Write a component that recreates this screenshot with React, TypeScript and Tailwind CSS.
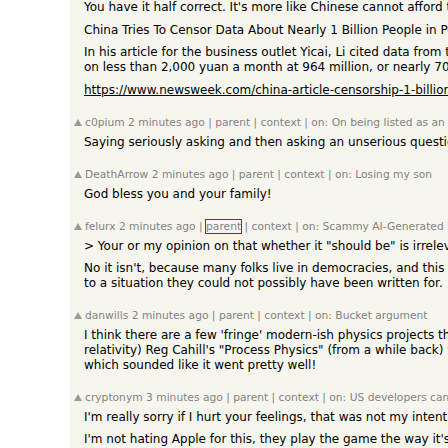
import React from 'react';

type Comment = {
  user: string;
  age: string;
  on: string;
  paras: string[][];
  focusParent?: boolean;
};

const comments: Comment[] = [
  {
    user: 'c0pium',
    age: '2 minutes ago',
    on: 'On being listed as an unserious person',
    paras: [['Saying seriously asking and then asking an unserious question is not how this works']],
  },
  {
    user: 'DeathArrow',
    age: '2 minutes ago',
    on: 'Losing my son',
    paras: [['God bless you and your family!']],
  },
  {
    user: 'felurx',
    age: '2 minutes ago',
    on: 'Scammy AI-Generated Book About Living with ADHD',
    focusParent: true,
    paras: [
      ['> Your or my opinion on that whether it "should be" is irrelevant here.'],
      [
        "No it isn't, because many folks live in democracies, and this is how laws get applied",
        'to a situation they could not possibly have been written for.',
      ],
    ],
  },
  {
    user: 'danwills',
    age: '2 minutes ago',
    on: 'Bucket argument',
    paras: [
      [
        "I think there are a few 'fringe' modern-ish physics projects that attempt this (beyond",
        'relativity) Reg Cahill\'s "Process Physics" (from a while back) was one I came across,',
        'which sounded like it went pretty well!',
      ],
    ],
  },
  {
    user: 'cryptonym',
    age: '3 minutes ago',
    on: 'US developers can now offer non-App-Store purchasing',
    paras: [
      ["I'm really sorry if I hurt your feelings, that was not my intention."],
      ["I'm not hating Apple for this, they play the game the way it's designed."],
    ],
  },
];

const Arrow = () => (
  <svg width="8" height="7" viewBox="0 0 8 7" className="shrink-0 mr-[3px]">
    <polygon points="4,0 8,7 0,7" fill="#9a9a9a" />
  </svg>
);

const Paras = ({ paras }: { paras: string[][] }) => (
  <div>
    {paras.map((lines, i) => (
      <div key={i} className={i === 0 ? '' : 'mt-[7px]'}>
        {lines.map((l, j) => (
          <div key={j} className="whitespace-nowrap leading-[15px] h-[15px]">
            {l}
          </div>
        ))}
      </div>
    ))}
  </div>
);

export default function App() {
  return (
    <div
      className="flex w-[448px] h-[448px] overflow-hidden bg-white text-black"
      style={{ fontFamily: '"DejaVu Sans", Verdana, sans-serif' }}
    >
      <div className="w-[70px] shrink-0 bg-white" />
      <div className="flex-1 bg-[#f6f6ef] overflow-hidden text-[12px]">
        <div className="pl-[14px]">
          <div className="whitespace-nowrap leading-[15px] h-[15px]">
            You have it half correct. It's more like Chinese cannot afford to live
          </div>
          <div className="mt-[8px] whitespace-nowrap leading-[15px] h-[15px]">
            China Tries To Censor Data About Nearly 1 Billion People in Poverty
          </div>
          <div className="mt-[7px]">
            <div className="whitespace-nowrap leading-[15px] h-[15px]">
              In his article for the business outlet Yicai, Li cited data from the bureau
            </div>
            <div className="whitespace-nowrap leading-[15px] h-[15px]">
              on less than 2,000 yuan a month at 964 million, or nearly 70 percent
            </div>
          </div>
          <div className="mt-[8px] whitespace-nowrap leading-[15px] h-[15px]">
            <a href="#" className="underline text-black">
              https://www.newsweek.com/china-article-censorship-1-billion-people-poverty
            </a>
          </div>
        </div>

        {comments.map((c) => (
          <div key={c.user} className="mt-[18px]">
            <div className="flex items-center h-[13px] pl-[4px] text-[10.7px] text-[#828282] whitespace-nowrap leading-[13px]">
              <Arrow />
              <span>
                {c.user} {c.age} |{' '}
                <span className={c.focusParent ? 'outline outline-1 outline-[#e00000]' : ''}>parent</span> | context | on:{' '}
                {c.on}
              </span>
            </div>
            <div className="mt-[6px] pl-[14px]">
              <Paras paras={c.paras} />
            </div>
          </div>
        ))}
      </div>
    </div>
  );
}
